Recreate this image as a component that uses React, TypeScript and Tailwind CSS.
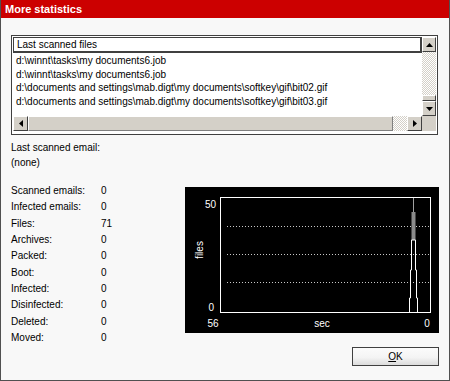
import React from "react";

const files = [
  "d:\\winnt\\tasks\\my documents6.job",
  "d:\\winnt\\tasks\\my documents6.job",
  "d:\\documents and settings\\mab.digt\\my documents\\softkey\\gif\\bit02.gif",
  "d:\\documents and settings\\mab.digt\\my documents\\softkey\\gif\\bit03.gif",
];

const stats: [string, string][] = [
  ["Scanned emails:", "0"],
  ["Infected emails:", "0"],
  ["Files:", "71"],
  ["Archives:", "0"],
  ["Packed:", "0"],
  ["Boot:", "0"],
  ["Infected:", "0"],
  ["Disinfected:", "0"],
  ["Deleted:", "0"],
  ["Moved:", "0"],
];

function Arrow({ dir }: { dir: "up" | "down" | "left" | "right" }) {
  const pts = {
    up: "0,4 7,4 3.5,0",
    down: "0,0 7,0 3.5,4",
    left: "4,0 4,7 0,3.5",
    right: "0,0 0,7 4,3.5",
  }[dir];
  const vert = dir === "up" || dir === "down";
  return (
    <svg width={vert ? 7 : 4} height={vert ? 4 : 7} viewBox={vert ? "0 0 7 4" : "0 0 4 7"}>
      <polygon points={pts} fill="#000" />
    </svg>
  );
}

function ScrollButton({ dir }: { dir: "up" | "down" | "left" | "right" }) {
  return (
    <div className="w-[14px] h-[15px] bg-[#d4d0c8] border border-t-white border-l-white border-b-[#404040] border-r-[#404040] flex items-center justify-center shrink-0">
      <Arrow dir={dir} />
    </div>
  );
}

const checker =
  "bg-[repeating-conic-gradient(#d4d0c8_0%_25%,#ffffff_0%_50%)] bg-[length:2px_2px]";

function Chart() {
  return (
    <svg width="254" height="146" viewBox="0 0 254 146" className="block">
      <rect x="35.5" y="10.5" width="210" height="115" fill="none" stroke="#fff" />
      {[39.5, 67.5, 95.5].map((y) => (
        <line key={y} x1="42" y1={y} x2="244" y2={y} stroke="#c8c8c8" strokeDasharray="1 2" />
      ))}
      <line x1="228.5" y1="11" x2="228.5" y2="53" stroke="#a0a0a0" />
      <rect x="226.5" y="25" width="4" height="28" fill="#8a8a8a" />
      <polyline
        points="224.5,125 224.5,111 225.5,111 225.5,83 226.5,83 226.5,53 230.5,53 230.5,83 231.5,83 231.5,111 232.5,111 232.5,125"
        fill="none"
        stroke="#fff"
      />
      <g fill="#fff" fontFamily="'Liberation Sans', Arial, sans-serif" fontSize="10">
        <text x="31" y="21" textAnchor="end">50</text>
        <text x="29" y="124" textAnchor="end">0</text>
        <text x="28" y="140" textAnchor="middle">56</text>
        <text x="137" y="140" textAnchor="middle">sec</text>
        <text x="242" y="140" textAnchor="middle">0</text>
        <text x="0" y="0" textAnchor="middle" transform="translate(18 63) rotate(-90)">files</text>
      </g>
    </svg>
  );
}

export default function App() {
  return (
    <div className="w-[450px] h-[381px] bg-[#f8f8f8] border-x border-b border-[#505050] flex flex-col font-['Liberation_Sans',Arial,sans-serif] text-[10px] text-black">
      <div className="h-[18px] bg-[#cc0000] text-white font-bold text-[11px] leading-[18px] pl-[4px]">
        More statistics
      </div>

      <div className="px-[10px] pt-[17px] flex flex-col">
        {/* file list */}
        <div className="w-[427px] h-[100px] border border-[#404040] bg-white p-[1px]">
          <div className="flex">
            <div className="w-[409px] h-[79px] overflow-hidden">
              <div className="h-[16px] border border-[#404040] border-b-2 border-r-2 pl-[3px] leading-[13px]">
                Last scanned files
              </div>
              <div className="pt-[1px] pl-[3px]">
                {files.map((f, i) => (
                  <div key={i} className="h-[13.67px] leading-[13.67px] whitespace-nowrap">
                    {f}
                  </div>
                ))}
              </div>
            </div>
            <div className="w-[14px] h-[79px] flex flex-col">
              <ScrollButton dir="up" />
              <div className={`flex-1 ${checker}`} />
              <div className="h-[6px] bg-[#d4d0c8] border border-t-white border-l-white border-b-[#404040] border-r-[#404040]" />
              <ScrollButton dir="down" />
            </div>
          </div>
          <div className="flex h-[15px]">
            <div className="w-[409px] flex">
              <div className="w-[15px] h-[15px] bg-[#d4d0c8] border border-t-white border-l-white border-b-[#404040] border-r-[#404040] flex items-center justify-center">
                <Arrow dir="left" />
              </div>
              <div className="w-[365px] bg-[#d4d0c8] border border-t-white border-l-white border-b-[#808080] border-r-[#808080]" />
              <div className={`w-[14px] ${checker}`} />
              <div className="w-[15px] h-[15px] bg-[#d4d0c8] border border-t-white border-l-white border-b-[#404040] border-r-[#404040] flex items-center justify-center">
                <Arrow dir="right" />
              </div>
            </div>
            <div className="w-[14px] bg-[#d4d0c8]" />
          </div>
        </div>

        <div className="mt-[5px] leading-[15px]">
          <div>Last scanned email:</div>
          <div>(none)</div>
        </div>

        <div className="mt-[13px] flex">
          <div className="w-[174px]">
            {stats.map(([k, v]) => (
              <div key={k} className="flex h-[16.33px] leading-[16.33px]">
                <span className="w-[90px]">{k}</span>
                <span>{v}</span>
              </div>
            ))}
          </div>
          <div className="mt-[4px] w-[254px] h-[146px] bg-black">
            <Chart />
          </div>
        </div>

        <div className="flex justify-end mt-[1px]">
          <button className="w-[87px] h-[19px] border border-[#404040] bg-[linear-gradient(#fbfbfb_0%,#f4f4f4_55%,#dcdcdc_100%)] text-[10px] leading-[17px]">
            <span className="underline">O</span>K
          </button>
        </div>
      </div>
    </div>
  );
}
